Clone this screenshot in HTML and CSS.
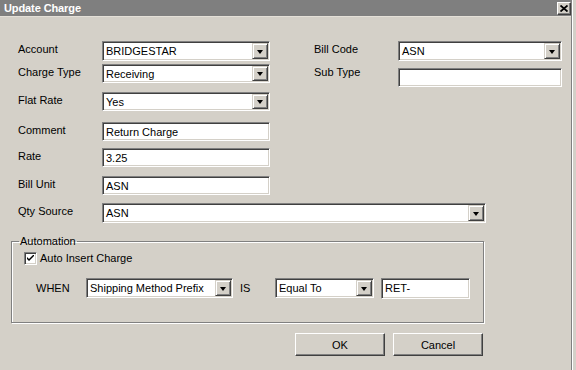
FILE: index.html
```html
<!DOCTYPE html>
<html lang="en">
<head>
  <meta charset="UTF-8" />
  <title>Update Charge</title>
  <link rel="stylesheet" href="styles.css">
</head>
<body>

  <div class="window">
    <div class="titlebar">
      <span class="title">Update Charge</span>
      <span class="close-btn">
        <svg width="8" height="7" viewBox="0 0 8 7"><path d="M0.5 0.5 L7.5 6.5 M7.5 0.5 L0.5 6.5" stroke="#000" stroke-width="1.8"/></svg>
      </span>
    </div>

    <div class="form-grid">
      <span class="lbl">Account</span>
      <div class="field select h20 col-main"><span class="value">BRIDGESTAR</span><span class="drop"></span></div>
      <span class="lbl col-rlabel">Bill Code</span>
      <div class="field select h20 col-rfield"><span class="value">ASN</span><span class="drop"></span></div>

      <span class="lbl">Charge Type</span>
      <div class="field select col-main"><span class="value">Receiving</span><span class="drop"></span></div>
      <span class="lbl col-rlabel">Sub Type</span>
      <div class="field col-rfield subtype"></div>

      <span class="lbl">Flat Rate</span>
      <div class="field select col-main"><span class="value">Yes</span><span class="drop"></span></div>

      <span class="lbl">Comment</span>
      <div class="field text col-main"><span class="value">Return Charge</span></div>

      <span class="lbl">Rate</span>
      <div class="field text col-main"><span class="value">3.25</span></div>

      <span class="lbl">Bill Unit</span>
      <div class="field text col-main"><span class="value">ASN</span></div>

      <span class="lbl">Qty Source</span>
      <div class="field select h20 col-wide"><span class="value">ASN</span><span class="drop"></span></div>
    </div>

    <fieldset class="group">
      <legend>Automation</legend>
      <div class="check-row">
        <span class="checkbox">
          <svg width="7" height="7" viewBox="0 0 7 7"><path d="M0 2 L0 4 L2 6 L7 1 L7 -1 L2 4 Z" fill="#000"/></svg>
        </span>
        <span>Auto Insert Charge</span>
      </div>
      <div class="when-row">
        <span class="when-lbl">WHEN</span>
        <div class="field select h20 w-prefix"><span class="value">Shipping Method Prefix</span><span class="drop"></span></div>
        <span class="is-lbl">IS</span>
        <div class="field select h20 w-op"><span class="value">Equal To</span><span class="drop"></span></div>
        <div class="field text h21 w-val"><span class="value value-top">RET-</span></div>
      </div>
    </fieldset>

    <div class="buttons">
      <button class="btn">OK</button>
      <button class="btn">Cancel</button>
    </div>
  </div>

</body>
</html>
```

FILE: styles.css
```css
body {
  margin: 0;
  background: #d4d0c8;
  font-family: 'Liberation Sans', Arial, sans-serif;
  font-size: 11px;
  color: #000;
}

.window {
  width: 571px;
  height: 370px;
  border-right: 1px solid #808080;
  box-shadow: 1px 0 0 #fff;
  background: #d4d0c8;
}

.titlebar {
  height: 16px;
  background: #7f7f7f;
  border-bottom: 1px solid #e4e0d8;
  display: flex;
  align-items: center;
  justify-content: space-between;
  padding-left: 4px;
}

.title {
  color: #fff;
  font-weight: bold;
  font-size: 11px;
  letter-spacing: -0.1px;
}

.close-btn {
  width: 14px;
  height: 13px;
  background: #d4d0c8;
  box-sizing: border-box;
  border: 1px solid;
  border-color: #fff #404040 #404040 #fff;
  box-shadow: inset -1px -1px #808080;
  display: flex;
  align-items: center;
  justify-content: center;
}

/* main form */
.form-grid {
  display: grid;
  grid-template-columns: 84px 168px 44px 84px 164px;
  grid-template-rows: 23px 28px 30px 26px 28px 27px 20px;
  margin-top: 24px;
  padding-left: 18px;
}

.lbl {
  grid-column: 1;
  padding-top: 2px;
  line-height: 13px;
}

.col-main { grid-column: 2; }
.col-rlabel { grid-column: 4; }
.col-rfield { grid-column: 5; }
.col-wide { grid-column: 2 / 6; width: 384px; }

.subtype {
  margin-top: 4px;
  height: 18px;
}

/* sunken boxes */
.field {
  box-sizing: border-box;
  height: 19px;
  background: #fff;
  border: 1px solid;
  border-color: #808080 #fff #fff #808080;
  box-shadow: inset 1px 1px #404040, inset -1px -1px #d4d0c8;
  display: flex;
  align-items: center;
  padding: 1px;
  align-self: start;
}

.field.h20 { height: 20px; }
.field.h21 { height: 21px; }

.value {
  flex: 1;
  padding-left: 2px;
  white-space: nowrap;
  overflow: hidden;
}

.value-top {
  align-self: flex-start;
  padding-top: 2px;
}

.drop {
  width: 16px;
  align-self: stretch;
  box-sizing: border-box;
  background: #d4d0c8;
  border: 1px solid;
  border-color: #d4d0c8 #404040 #404040 #d4d0c8;
  box-shadow: inset 1px 1px #fff, inset -1px -1px #808080;
  display: flex;
  align-items: center;
  justify-content: center;
}

.drop::after {
  content: "";
  width: 0;
  height: 0;
  border-left: 3.5px solid transparent;
  border-right: 3.5px solid transparent;
  border-top: 4px solid #000;
  margin-top: 1px;
}

/* automation group */
.group {
  box-sizing: border-box;
  width: 473px;
  margin: 12px 0 0 11px;
  padding: 0 0 23px 0;
  border: 1px solid #808080;
  box-shadow: inset 1px 1px #fff, 1px 1px #fff;
}

.group legend {
  margin-left: 7px;
  padding: 0 1px;
  line-height: 13px;
}

.check-row {
  display: flex;
  align-items: center;
  gap: 3px;
  margin: 4px 0 0 12px;
  line-height: 13px;
}

.checkbox {
  width: 13px;
  height: 13px;
  box-sizing: border-box;
  background: #fff;
  border: 1px solid;
  border-color: #808080 #fff #fff #808080;
  box-shadow: inset 1px 1px #404040, inset -1px -1px #d4d0c8;
  display: flex;
  align-items: center;
  justify-content: center;
}

.when-row {
  display: flex;
  align-items: center;
  margin: 13px 0 0 24px;
}

.when-lbl {
  width: 50px;
  margin-top: -2px;
}

.is-lbl {
  width: 42px;
  padding-left: 7px;
  box-sizing: border-box;
  margin-top: -2px;
}

.w-prefix { width: 147px; }
.w-op { width: 99px; margin-right: 7px; }
.w-val { width: 89px; }

/* buttons */
.buttons {
  width: 483px;
  display: flex;
  justify-content: flex-end;
  gap: 8px;
  margin-top: 10px;
}

.btn {
  width: 90px;
  height: 23px;
  box-sizing: border-box;
  font-family: 'Liberation Sans', Arial, sans-serif;
  font-size: 11px;
  color: #000;
  background: #d4d0c8;
  border: 1px solid;
  border-color: #fff #404040 #404040 #fff;
  box-shadow: inset -1px -1px #808080;
  padding: 0;
}
```
